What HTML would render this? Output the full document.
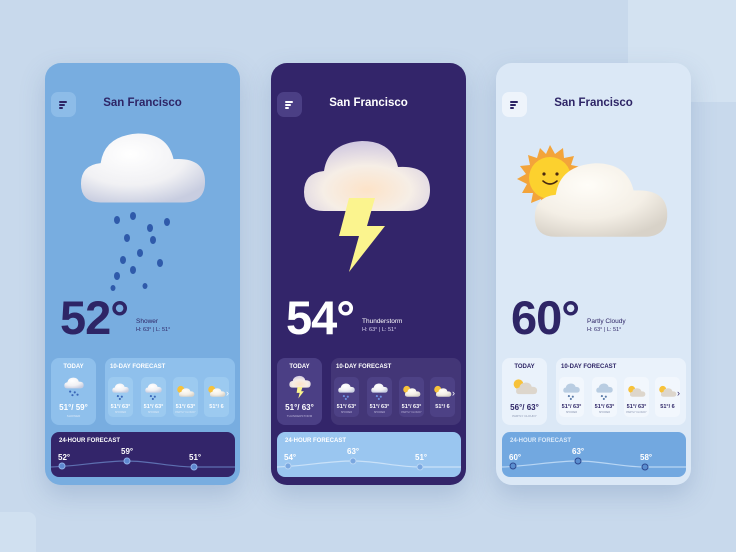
<!DOCTYPE html>
<html><head><meta charset="utf-8"><style>
*{margin:0;padding:0;box-sizing:border-box}
body{width:736px;height:552px;overflow:hidden;background:#c8d9ec;font-family:"Liberation Sans",sans-serif;position:relative}
.bgsq{position:absolute;left:628px;top:0;width:108px;height:102px;background:#d3e2f1}
.bgsq2{position:absolute;left:0;top:512px;width:36px;height:40px;background:#d0e0f0;border-radius:0 8px 0 0}
.card{position:absolute;top:63px;width:195px;height:422px;border-radius:16px;overflow:hidden;box-shadow:0 10px 25px rgba(80,110,160,.25)}
.a{position:absolute}
.menu{left:6px;top:29px;width:25px;height:25px;border-radius:7px}
.menu i{position:absolute;left:8px;height:1.5px;border-radius:1px}
.title{left:0;width:195px;top:34px;text-align:center;font-size:11.5px;font-weight:bold}
.temp{left:15px;top:227px;font-size:47px;font-weight:bold;letter-spacing:-1px}
.desc{left:91px;top:255px;font-size:6.5px}
.hl{left:91px;top:264px;font-size:5.5px}
.today{left:6px;top:295px;width:45px;height:67px;border-radius:8px}
.ten{left:60px;top:295px;width:130px;height:67px;border-radius:8px;overflow:hidden}
.lbl{font-size:6px;font-weight:bold}
.mini{top:19px;width:25px;height:40px;border-radius:5px}
.mt{position:absolute;left:0;width:25px;top:27px;text-align:center;font-size:5.5px;font-weight:bold;white-space:nowrap}
.ms{position:absolute;left:0;width:25px;top:34px;text-align:center;font-size:2.5px}
.h24{left:6px;top:369px;width:184px;height:45px;border-radius:8px;overflow:hidden}
.pt{font-size:8px;font-weight:bold}
</style></head><body>
<div class="bgsq"></div><div class="bgsq2"></div>
<svg width="0" height="0" style="position:absolute">
<defs>
<radialGradient id="cg" cx="40%" cy="30%" r="75%"><stop offset="0" stop-color="#ffffff"/><stop offset=".6" stop-color="#f1f1f4"/><stop offset="1" stop-color="#c8cde0"/></radialGradient>
<radialGradient id="cg2" cx="50%" cy="70%" r="70%"><stop offset="0" stop-color="#fde3c8"/><stop offset=".5" stop-color="#f6eee6"/><stop offset="1" stop-color="#cfc7e0"/></radialGradient>
<radialGradient id="cg3" cx="40%" cy="30%" r="75%"><stop offset="0" stop-color="#fffdf8"/><stop offset=".6" stop-color="#f4efe6"/><stop offset="1" stop-color="#d8d2c8"/></radialGradient>
<path id="cloud" d="M22 74 Q2 74 2 55 Q2 36 22 34 Q26 6 60 4 Q90 4 96 30 Q128 28 128 53 Q128 74 106 74 Z"/>
</defs></svg>

<!-- Card 1 -->
<div class="card" style="left:45px;background:#78ade0">
 <div class="a menu" style="background:#8dbce8"><i style="top:9px;width:8px;background:#2e2566"></i><i style="top:12px;width:6px;background:#2e2566"></i><i style="top:15px;width:4px;background:#2e2566"></i></div>
 <div class="a title" style="color:#2e2566">San Francisco</div>
 <svg class="a" style="left:34px;top:66px" width="128" height="78" viewBox="0 0 130 78"><use href="#cloud" fill="url(#cg)"/></svg>
 <svg class="a" style="left:60px;top:145px" width="75" height="85" viewBox="0 0 75 85" fill="#2f5aaa">
  <g><ellipse cx="12" cy="12" rx="3" ry="4"/><ellipse cx="28" cy="8" rx="3" ry="4"/><ellipse cx="45" cy="20" rx="3" ry="4"/><ellipse cx="62" cy="14" rx="3" ry="4"/><ellipse cx="22" cy="30" rx="3" ry="4"/><ellipse cx="48" cy="32" rx="3" ry="4"/><ellipse cx="35" cy="45" rx="3" ry="4"/><ellipse cx="55" cy="55" rx="3" ry="4"/><ellipse cx="18" cy="52" rx="3" ry="4"/><ellipse cx="12" cy="68" rx="3" ry="4"/><ellipse cx="28" cy="62" rx="3" ry="4"/><ellipse cx="8" cy="80" rx="2.5" ry="3"/><ellipse cx="40" cy="78" rx="2.5" ry="3"/></g></svg>
 <div class="a temp" style="color:#2e2566">52°</div>
 <div class="a desc" style="color:#2e2566">Shower</div>
 <div class="a hl" style="color:#2e2566">H: 63° | L: 51°</div>
 <div class="a today" style="background:#8fc0ec">
  <div class="a lbl" style="left:0;width:45px;top:6px;text-align:center;color:#fff">TODAY</div>
  <svg class="a" style="left:13px;top:19px" width="20" height="20" viewBox="0 0 130 130"><use href="#cloud" fill="url(#cg)"/><g fill="#3a66b8"><circle cx="40" cy="95" r="7"/><circle cx="70" cy="100" r="7"/><circle cx="55" cy="118" r="7"/><circle cx="88" cy="115" r="7"/></g></svg>
  <div class="a" style="left:0;width:45px;top:45px;text-align:center;font-size:8px;font-weight:bold;color:#fff">51°/ 59°</div>
  <div class="a" style="left:0;width:45px;top:56px;text-align:center;font-size:3px;color:#dbe9f8">SHOWER</div>
 </div>
 <div class="a ten" style="background:#8fc0ec">
  <div class="a lbl" style="left:5px;top:6px;color:#fff">10-DAY FORECAST</div>
  <div class="a mini" style="left:3px;background:#9ccaf0"><svg class="a" style="left:4px;top:6px" width="17" height="17" viewBox="0 0 130 130"><use href="#cloud" fill="url(#cg)"/><g fill="#3a66b8"><circle cx="45" cy="100" r="8"/><circle cx="75" cy="105" r="8"/><circle cx="60" cy="122" r="8"/></g></svg><div class="mt" style="color:#fff">51°/ 63°</div><div class="ms" style="color:#dbe9f8">SHOWER</div></div>
  <div class="a mini" style="left:36px;background:#9ccaf0"><svg class="a" style="left:4px;top:6px" width="17" height="17" viewBox="0 0 130 130"><use href="#cloud" fill="url(#cg)"/><g fill="#3a66b8"><circle cx="45" cy="100" r="8"/><circle cx="75" cy="105" r="8"/><circle cx="60" cy="122" r="8"/></g></svg><div class="mt" style="color:#fff">51°/ 63°</div><div class="ms" style="color:#dbe9f8">SHOWER</div></div>
  <div class="a mini" style="left:68px;background:#9ccaf0"><svg class="a" style="left:3px;top:6px" width="19" height="17" viewBox="0 0 140 100"><circle cx="35" cy="35" r="26" fill="#f7c23a"/><use href="#cloud" fill="url(#cg3)" transform="translate(20,22) scale(.9)"/></svg><div class="mt" style="color:#fff">51°/ 63°</div><div class="ms" style="color:#dbe9f8">PARTLY CLOUDY</div></div>
  <div class="a mini" style="left:99px;background:#9ccaf0"><svg class="a" style="left:3px;top:6px" width="19" height="17" viewBox="0 0 140 100"><circle cx="35" cy="35" r="26" fill="#f7c23a"/><use href="#cloud" fill="url(#cg3)" transform="translate(20,22) scale(.9)"/></svg><div class="mt" style="color:#fff">51°/ 6</div></div>
  <div class="a" style="left:121px;top:30px;font-size:9px;color:#fff">›</div>
 </div>
 <div class="a h24" style="background:#33256a">
  <div class="a lbl" style="left:8px;top:6px;color:#fff">24-HOUR FORECAST</div>
  <svg class="a" style="left:0;top:0" width="184" height="45"><path d="M0 35 C30 34 50 29 76 29 C100 29 120 35 143 35 L184 35" stroke="#5d6fb0" stroke-width="1.2" fill="none"/><g fill="#5e88d0" stroke="#8fb0e8" stroke-width="1"><circle cx="11" cy="34" r="3"/><circle cx="76" cy="29" r="3"/><circle cx="143" cy="35" r="3"/></g></svg>
  <div class="a pt" style="left:7px;top:21px;color:#fff">52°</div>
  <div class="a pt" style="left:70px;top:15px;color:#fff">59°</div>
  <div class="a pt" style="left:138px;top:21px;color:#fff">51°</div>
 </div>
</div>

<!-- Card 2 -->
<div class="card" style="left:271px;background:#33256a">
 <div class="a menu" style="background:#4b3f85"><i style="top:9px;width:8px;background:#fff"></i><i style="top:12px;width:6px;background:#fff"></i><i style="top:15px;width:4px;background:#fff"></i></div>
 <div class="a title" style="color:#fff">San Francisco</div>
 <svg class="a" style="left:31px;top:74px" width="130" height="78" viewBox="0 0 130 78"><use href="#cloud" fill="url(#cg2)"/></svg>
 <svg class="a" style="left:64px;top:133px" width="52" height="78" viewBox="0 0 52 78"><path d="M14 2 L40 2 L32 30 L50 30 L14 76 L24 40 L4 40 Z" fill="#fbf48e"/></svg>
 <div class="a temp" style="color:#fff">54°</div>
 <div class="a desc" style="color:#fff">Thunderstorm</div>
 <div class="a hl" style="color:#d8d2f0">H: 63° | L: 51°</div>
 <div class="a today" style="background:#4b3f85">
  <div class="a lbl" style="left:0;width:45px;top:6px;text-align:center;color:#fff">TODAY</div>
  <svg class="a" style="left:12px;top:17px" width="22" height="24" viewBox="0 0 130 140"><use href="#cloud" fill="url(#cg2)"/><path d="M50 70 L80 70 L72 95 L88 95 L55 138 L63 105 L45 105 Z" fill="#fbf48e"/></svg>
  <div class="a" style="left:0;width:45px;top:45px;text-align:center;font-size:8px;font-weight:bold;color:#fff">51°/ 63°</div>
  <div class="a" style="left:0;width:45px;top:56px;text-align:center;font-size:3px;color:#b9b2d8">THUNDERSTORM</div>
 </div>
 <div class="a ten" style="background:#433677">
  <div class="a lbl" style="left:5px;top:6px;color:#fff">10-DAY FORECAST</div>
  <div class="a mini" style="left:3px;background:#4d4185"><svg class="a" style="left:4px;top:6px" width="17" height="17" viewBox="0 0 130 130"><use href="#cloud" fill="url(#cg)"/><g fill="#6d8fe0"><circle cx="45" cy="100" r="8"/><circle cx="75" cy="105" r="8"/><circle cx="60" cy="122" r="8"/></g></svg><div class="mt" style="color:#fff">51°/ 63°</div><div class="ms" style="color:#b9b2d8">SHOWER</div></div>
  <div class="a mini" style="left:36px;background:#4d4185"><svg class="a" style="left:4px;top:6px" width="17" height="17" viewBox="0 0 130 130"><use href="#cloud" fill="url(#cg)"/><g fill="#6d8fe0"><circle cx="45" cy="100" r="8"/><circle cx="75" cy="105" r="8"/><circle cx="60" cy="122" r="8"/></g></svg><div class="mt" style="color:#fff">51°/ 63°</div><div class="ms" style="color:#b9b2d8">SHOWER</div></div>
  <div class="a mini" style="left:68px;background:#4d4185"><svg class="a" style="left:3px;top:6px" width="19" height="17" viewBox="0 0 140 100"><circle cx="35" cy="35" r="26" fill="#f7c23a"/><use href="#cloud" fill="url(#cg3)" transform="translate(20,22) scale(.9)"/></svg><div class="mt" style="color:#fff">51°/ 63°</div><div class="ms" style="color:#b9b2d8">PARTLY CLOUDY</div></div>
  <div class="a mini" style="left:99px;background:#4d4185"><svg class="a" style="left:3px;top:6px" width="19" height="17" viewBox="0 0 140 100"><circle cx="35" cy="35" r="26" fill="#f7c23a"/><use href="#cloud" fill="url(#cg3)" transform="translate(20,22) scale(.9)"/></svg><div class="mt" style="color:#fff">51°/ 6</div></div>
  <div class="a" style="left:121px;top:30px;font-size:9px;color:#fff">›</div>
 </div>
 <div class="a h24" style="background:#9ac6f0">
  <div class="a lbl" style="left:8px;top:6px;color:#fff">24-HOUR FORECAST</div>
  <svg class="a" style="left:0;top:0" width="184" height="45"><path d="M0 35 C30 34 50 29 76 29 C100 29 120 35 143 35 L184 35" stroke="#c9e1f8" stroke-width="1.2" fill="none"/><g fill="#7aa7e0" stroke="#b7d5f4" stroke-width="1"><circle cx="11" cy="34" r="3"/><circle cx="76" cy="29" r="3"/><circle cx="143" cy="35" r="3"/></g></svg>
  <div class="a pt" style="left:7px;top:21px;color:#fff">54°</div>
  <div class="a pt" style="left:70px;top:15px;color:#fff">63°</div>
  <div class="a pt" style="left:138px;top:21px;color:#fff">51°</div>
 </div>
</div>

<!-- Card 3 -->
<div class="card" style="left:496px;background:#dbe8f6">
 <div class="a menu" style="background:#eef4fb"><i style="top:9px;width:8px;background:#2e2566"></i><i style="top:12px;width:6px;background:#2e2566"></i><i style="top:15px;width:4px;background:#2e2566"></i></div>
 <div class="a title" style="color:#2e2566">San Francisco</div>
 <svg class="a" style="left:17px;top:80px" width="75" height="72" viewBox="0 0 75 72">
  <polygon points="37,2 42,11 50,5 51,15 61,13 58,22 68,24 62,31 70,37 61,41 66,50 56,50 57,60 48,56 44,66 38,58 30,66 28,56 18,60 20,50 9,50 14,41 4,36 13,31 7,23 17,22 15,12 24,15 27,5 33,11" fill="#f3a43a"/>
  <circle cx="37" cy="35" r="21" fill="#fcd12e"/>
  <circle cx="31" cy="31" r="1.6" fill="#4a2a10"/><circle cx="44" cy="31" r="1.6" fill="#4a2a10"/>
  <path d="M30 38 Q37 44 44 38" stroke="#4a2a10" stroke-width="1.6" fill="none" stroke-linecap="round"/>
 </svg>
 <svg class="a" style="left:34px;top:96px" width="142" height="82" viewBox="0 0 130 78"><use href="#cloud" fill="url(#cg3)"/></svg>
 <div class="a temp" style="color:#2e2566">60°</div>
 <div class="a desc" style="color:#2e2566">Partly Cloudy</div>
 <div class="a hl" style="color:#2e2566">H: 63° | L: 51°</div>
 <div class="a today" style="background:#eaf2fb">
  <div class="a lbl" style="left:0;width:45px;top:6px;text-align:center;color:#2e2566">TODAY</div>
  <svg class="a" style="left:10px;top:18px" width="26" height="22" viewBox="0 0 140 100"><circle cx="35" cy="35" r="26" fill="#f7c23a"/><use href="#cloud" fill="#ddd6cc" transform="translate(20,22) scale(.9)"/></svg>
  <div class="a" style="left:0;width:45px;top:45px;text-align:center;font-size:8px;font-weight:bold;color:#2e2566">56°/ 63°</div>
  <div class="a" style="left:0;width:45px;top:56px;text-align:center;font-size:3px;color:#8a95b0">PARTLY CLOUDY</div>
 </div>
 <div class="a ten" style="background:#eaf2fb">
  <div class="a lbl" style="left:5px;top:6px;color:#2e2566">10-DAY FORECAST</div>
  <div class="a mini" style="left:3px;background:#f2f7fd"><svg class="a" style="left:4px;top:6px" width="17" height="17" viewBox="0 0 130 130"><use href="#cloud" fill="#b9cde2"/><g fill="#5a7aa8"><circle cx="45" cy="100" r="8"/><circle cx="75" cy="105" r="8"/><circle cx="60" cy="122" r="8"/></g></svg><div class="mt" style="color:#2e2566">51°/ 63°</div><div class="ms" style="color:#8a95b0">SHOWER</div></div>
  <div class="a mini" style="left:36px;background:#f2f7fd"><svg class="a" style="left:4px;top:6px" width="17" height="17" viewBox="0 0 130 130"><use href="#cloud" fill="#b9cde2"/><g fill="#5a7aa8"><circle cx="45" cy="100" r="8"/><circle cx="75" cy="105" r="8"/><circle cx="60" cy="122" r="8"/></g></svg><div class="mt" style="color:#2e2566">51°/ 63°</div><div class="ms" style="color:#8a95b0">SHOWER</div></div>
  <div class="a mini" style="left:68px;background:#f2f7fd"><svg class="a" style="left:3px;top:6px" width="19" height="17" viewBox="0 0 140 100"><circle cx="35" cy="35" r="26" fill="#f7c23a"/><use href="#cloud" fill="#ddd6cc" transform="translate(20,22) scale(.9)"/></svg><div class="mt" style="color:#2e2566">51°/ 63°</div><div class="ms" style="color:#8a95b0">PARTLY CLOUDY</div></div>
  <div class="a mini" style="left:99px;background:#f2f7fd"><svg class="a" style="left:3px;top:6px" width="19" height="17" viewBox="0 0 140 100"><circle cx="35" cy="35" r="26" fill="#f7c23a"/><use href="#cloud" fill="#ddd6cc" transform="translate(20,22) scale(.9)"/></svg><div class="mt" style="color:#2e2566">51°/ 6</div></div>
  <div class="a" style="left:121px;top:30px;font-size:9px;color:#2e2566">›</div>
 </div>
 <div class="a h24" style="background:#72a8e0">
  <div class="a lbl" style="left:8px;top:6px;color:#dbeafa">24-HOUR FORECAST</div>
  <svg class="a" style="left:0;top:0" width="184" height="45"><path d="M0 35 C30 34 50 29 76 29 C100 29 120 35 143 35 L184 35" stroke="#b8d6f4" stroke-width="1.2" fill="none"/><g fill="#5a8ed0" stroke="#2e4a90" stroke-width="1"><circle cx="11" cy="34" r="3"/><circle cx="76" cy="29" r="3"/><circle cx="143" cy="35" r="3"/></g></svg>
  <div class="a pt" style="left:7px;top:21px;color:#fff">60°</div>
  <div class="a pt" style="left:70px;top:15px;color:#fff">63°</div>
  <div class="a pt" style="left:138px;top:21px;color:#fff">58°</div>
 </div>
</div>
</body></html>
